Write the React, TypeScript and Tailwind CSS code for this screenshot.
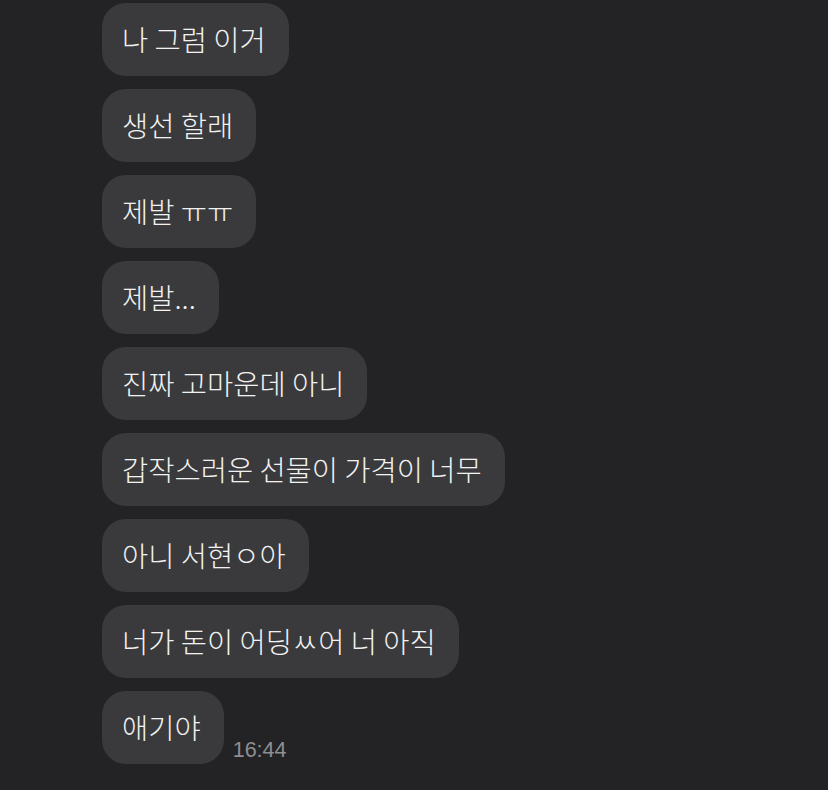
import React from "react";

const msgs = [
  "나 그럼 이거",
  "생선 할래",
  "제발 ㅠㅠ",
  "제발...",
  "진짜 고마운데 아니",
  "갑작스러운 선물이 가격이 너무",
  "아니 서현ㅇ아",
  "너가 돈이 어딩ㅆ어 너 아직",
  "애기야",
];

export default function App() {
  return (
    <div
      className="w-[828px] h-[790px] bg-[#232325] overflow-hidden pl-[102px] pt-[3px] flex flex-col gap-[13px]"
      style={{ fontFamily: '"Noto Sans CJK KR", "Noto Sans", sans-serif' }}
    >
      {msgs.map((m, i) => (
        <div key={i} className="flex items-end gap-[9px]">
          <div className="h-[73px] rounded-[24px] bg-[#3a3a3c] pl-[20px] pr-[23px] flex items-center text-[28.5px] font-light text-[#f2f2f2] whitespace-nowrap">
            {m}
          </div>
          {i === msgs.length - 1 && (
            <span
              className="text-[21.5px] text-[#8e8e93] leading-none pb-[3px]"
              style={{ fontFamily: '"Liberation Sans", Arial, sans-serif' }}
            >
              16:44
            </span>
          )}
        </div>
      ))}
    </div>
  );
}
